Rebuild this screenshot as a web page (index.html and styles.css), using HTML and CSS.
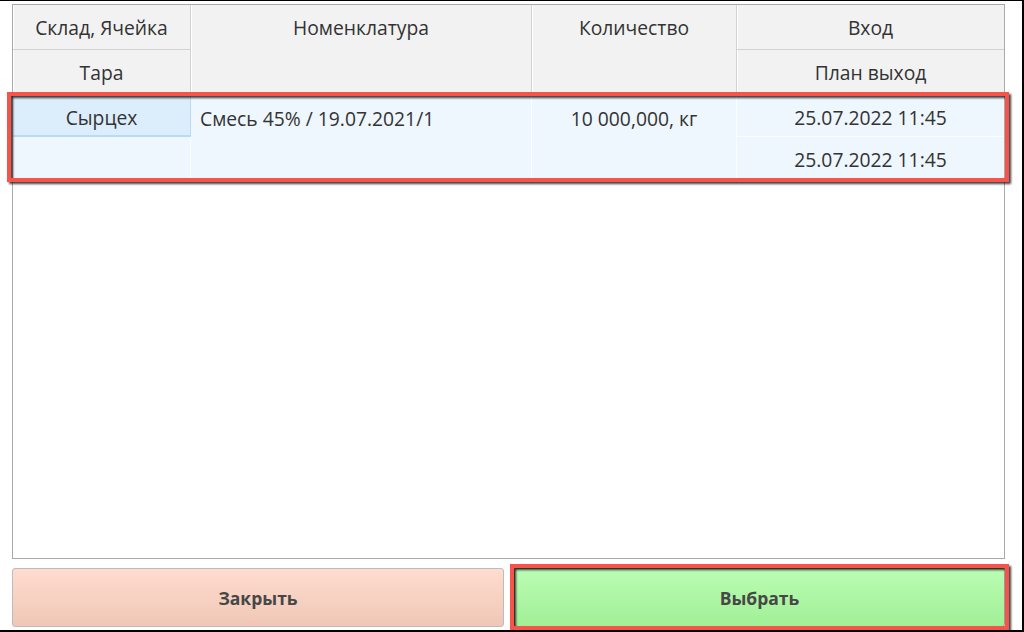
FILE: index.html
```html
<!DOCTYPE html>
<html lang="ru">
<head>
<meta charset="utf-8">
<title>Выбор</title>
<link rel="stylesheet" href="styles.css">
</head>
<body>
<div class="screen">
  <div class="table">
    <div class="head">
      <div class="hcell c1 r1">Склад, Ячейка</div>
      <div class="hcell c2 span">Номенклатура</div>
      <div class="hcell c3 span">Количество</div>
      <div class="hcell c4 r1">Вход</div>
      <div class="hcell c1 r2">Тара</div>
      <div class="hcell c4 r2">План выход</div>
    </div>
    <div class="row">
      <div class="dcell c1 sel">Сырцех</div>
      <div class="dcell c2 span left">Смесь 45% / 19.07.2021/1</div>
      <div class="dcell c3 span">10 000,000, кг</div>
      <div class="dcell c4 top">25.07.2022 11:45</div>
      <div class="dcell c1 low"></div>
      <div class="dcell c4 low">25.07.2022 11:45</div>
    </div>
  </div>
  <div class="actions">
    <button class="btn btn-close">Закрыть</button>
    <button class="btn btn-select">Выбрать</button>
  </div>
</div>
</body>
</html>
```
FILE: styles.css
```css
* { box-sizing: border-box; }
html, body { margin: 0; padding: 0; background: #fff; }
body {
  font-family: "Open Sans", "Noto Sans", sans-serif;
  color: #333;
}
.screen {
  width: 1024px;
  height: 632px;
  border-top: 1px solid #000;
  border-right: 2px solid #000;
  border-bottom: 2px solid #000;
  padding: 3px 0 0 12px;
  display: flex;
  flex-direction: column;
  background: #fff;
}
.table {
  width: 993px;
  height: 555px;
  border: 1px solid #a9a9a9;
  background: #fff;
}
.head, .row {
  display: grid;
  grid-template-columns: 178px 341px 205px 267px;
}
.head {
  grid-template-rows: 45px 44px;
  background: #f2f2f2;
}
.hcell {
  font-size: 19.3px;
  line-height: 46px;
  text-align: center;
  border-right: 1px solid #d2d2d2;
  border-bottom: 1px solid #d2d2d2;
  box-shadow: inset 1px 0 0 #fff;
  white-space: nowrap;
}
.hcell.c4 { border-right: none; }
.hcell.r2 { border-bottom: none; line-height: 46px; }
.hcell.span { grid-row: 1 / span 2; border-bottom: none; }
.c1 { grid-column: 1; }
.c2 { grid-column: 2; }
.c3 { grid-column: 3; }
.c4 { grid-column: 4; }
.r2 { grid-row: 2; }

.row {
  position: relative;
  grid-template-rows: 43px 43px;
  background: #eef6fe;
}
.row::after {
  content: "";
  position: absolute;
  left: -6px;
  right: -5px;
  top: -2px;
  bottom: -2px;
  border: 4px solid #f6544a;
  filter: drop-shadow(2px 2px 1px rgba(0, 0, 0, 0.75));
  pointer-events: none;
}
.dcell {
  font-size: 19.3px;
  line-height: 50px;
  text-align: center;
  border-right: 1px solid #fbfdff;
  white-space: nowrap;
}
.dcell.c4 { border-right: none; }
.dcell.span { grid-row: 1 / span 2; }
.dcell.left { text-align: left; padding-left: 9px; }
.dcell.top { border-bottom: 1px solid #fbfdff; line-height: 48px; }
.dcell.low { grid-row: 2; line-height: 46px; }
.dcell.sel {
  background: #dcedfc;
  border-right: 1px solid #b9dbf5;
  border-bottom: 2px solid #b9dbf5;
  line-height: 47px;
}

.actions {
  margin-top: 9px;
  width: 993px;
  display: grid;
  grid-template-columns: 492px 491px;
  gap: 10px;
}
.btn {
  height: 59px;
  font-family: "Open Sans", "Noto Sans", sans-serif;
  font-size: 17.5px;
  font-weight: 700;
  color: #474747;
  border-radius: 3px;
  padding: 0;
}
.btn-close {
  border: 1px solid #bcbcbc;
  background: linear-gradient(#fedccf, #f0c7b6);
}
.btn-select {
  position: relative;
  border: 1px solid #9a9a9a;
  background: linear-gradient(#bafdb4, #a1ef96);
}
.btn-select::after {
  content: "";
  position: absolute;
  left: -5px;
  right: -5px;
  top: -5px;
  bottom: -4px;
  border: 4px solid #f6544a;
  filter: drop-shadow(2px 2px 1px rgba(0, 0, 0, 0.75));
  pointer-events: none;
}
```
